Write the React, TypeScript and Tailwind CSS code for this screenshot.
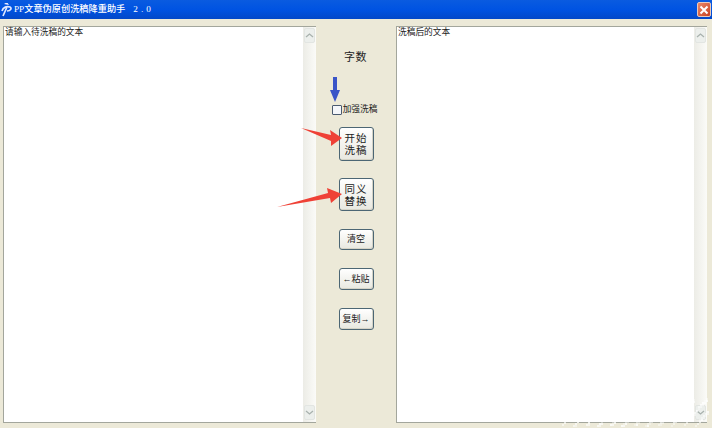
const cjk = "font-['Liberation_Sans','Noto_Sans_CJK_SC',sans-serif]";

const specks = Array.from({ length: 260 }, (_, i) => ({
  x: 562 + ((i * 53) % 146),
  y: 398 + ((i * 37) % 28),
  o: 0.35 + ((i * 7) % 5) / 10,
}));

function Chevron({ up }: { up?: boolean }) {
  return (
    <div className="w-[11px] h-[15px] rounded-[2px] bg-[#ecefec] border border-[#e2e5e2] flex items-center justify-center">
      <svg width="9" height="7" viewBox="0 0 9 7" fill="none">
        <path d={up ? "M1 5 L4.5 2 L8 5" : "M1 2 L4.5 5 L8 2"} stroke="#a9b2ae" strokeWidth="1.3" />
      </svg>
    </div>
  );
}

function TextPane({ text, w }: { text: string; w: string }) {
  return (
    <div className={`${w} h-full flex bg-white border-l border-t border-b border-[#a3a69c]`}>
      <div className="flex-1 pl-[1px] text-[8.7px] leading-[11px] text-[#222]">{text}</div>
      <div className="w-[13px] h-full bg-gradient-to-r from-[#ececE6] to-[#fbfbf8] flex flex-col items-center justify-between pt-[1px] pb-[2px]">
        <Chevron up />
        <Chevron />
      </div>
    </div>
  );
}

function Btn({ children, h, mt }: { children: React.ReactNode; h: string; mt: string }) {
  return (
    <div
      className={`${h} ${mt} w-[35px] shrink-0 rounded-[3px] border border-[#4c6674] bg-gradient-to-b from-white to-[#e8e8e0] flex items-center justify-center text-center text-[#222] shadow-[inset_-1px_-1px_0_#d5d3c6]`}
    >
      {children}
    </div>
  );
}

export default function App() {
  return (
    <div className={`relative w-[712px] h-[428px] overflow-hidden bg-[#ece9d8] flex flex-col ${cjk}`}>
      <div className="h-[19px] shrink-0 bg-gradient-to-b from-[#0a5be0] via-[#0053e2] to-[#0348c8] flex items-center justify-between pl-[1px]">
        <div className="flex items-center gap-[1px]">
          <svg width="12" height="14" viewBox="0 0 12 14" fill="none">
            <path d="M3 1 L6 -1 L8 2 Z" fill="#eef" />
            <path d="M1 8 C2 4 6 3 9 4 C11 5 10 8 6 8 M6 4 L2 13" stroke="#dfe8ff" strokeWidth="1.7" />
          </svg>
          <span className="text-[9.2px] font-medium leading-none text-white font-['Liberation_Serif','Noto_Sans_CJK_SC',serif] whitespace-nowrap">
            PP文章伪原创洗稿降重助手<span className="ml-[8px] tracking-[3px]">2.0</span>
          </span>
        </div>
        <div className="w-[14px] h-[15px] rounded-[2px] border border-[#e8c9bc] bg-gradient-to-br from-[#e8876a] to-[#c8411f] flex items-center justify-center mr-[1px]">
          <svg width="10" height="10" viewBox="0 0 10 10">
            <path d="M1.5 1.5 L8.5 8.5 M8.5 1.5 L1.5 8.5" stroke="#fff" strokeWidth="2" />
          </svg>
        </div>
      </div>

      <div className="flex-1 min-h-0 flex pl-[3px] pr-[5px] pt-[7px] pb-[5px]">
        <TextPane text="请输入待洗稿的文本" w="w-[313px]" />
        <div className="w-[80px] shrink-0 flex flex-col items-center">
          <div className="mt-[24px] text-[11px] leading-[14px] text-[#222] tracking-[0.5px] ml-[-1px]">字数</div>
          <div className="mt-[40px] flex items-center gap-[1px] ml-[-3px]">
            <div className="w-[10px] h-[10px] bg-[#f4f6fa] border border-[#4a5a70] rounded-[1px]" />
            <span className="text-[8.7px] leading-[11px] text-[#222]">加强洗稿</span>
          </div>
          <Btn h="h-[34px]" mt="mt-[12px]">
            <span className="text-[10.5px] leading-[12px] tracking-[1px]">开始<br />洗稿</span>
          </Btn>
          <Btn h="h-[33px]" mt="mt-[17px]">
            <span className="text-[10.5px] leading-[12px] tracking-[1px]">同义<br />替换</span>
          </Btn>
          <Btn h="h-[21px]" mt="mt-[18px]">
            <span className="text-[9px] leading-none">清空</span>
          </Btn>
          <Btn h="h-[22px]" mt="mt-[18px]">
            <span className="text-[9px] leading-none whitespace-nowrap">←粘贴</span>
          </Btn>
          <Btn h="h-[22px]" mt="mt-[18px]">
            <span className="text-[9px] leading-none whitespace-nowrap">复制→</span>
          </Btn>
        </div>
        <TextPane text="洗稿后的文本" w="w-[311px]" />
      </div>

      <svg className="absolute left-0 top-0 pointer-events-none" width="712" height="428" viewBox="0 0 712 428">
        <path d="M301 128 L331 135 L330 130 L342 138 L331 146 L331 141 Z" fill="#ef4136" />
        <path d="M277 207 L328 193 L327 188 L342 194 L331 203 L330 198 Z" fill="#ef4136" />
        <path d="M333 77 L337 77 L337 90 L340 90 L335 102 L330 90 L333 90 Z" fill="#3a55c8" />
        {specks.map((s, i) => (
          <rect key={i} x={s.x} y={s.y} width="2" height="2" fill="#ffffff" opacity={s.o} />
        ))}
      </svg>
    </div>
  );
}
